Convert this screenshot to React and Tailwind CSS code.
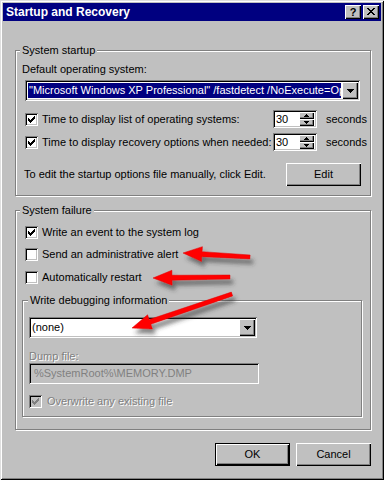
import React from 'react';

const raised = 'shadow-[inset_1px_1px_0_#fff,inset_-1px_-1px_0_#000,inset_-2px_-2px_0_#808080]';
const sunken = 'shadow-[inset_1px_1px_0_#808080,inset_-1px_-1px_0_#fff,inset_2px_2px_0_#000,inset_-2px_-2px_0_#c0c0c0]';
const disabledText = 'text-[#808080] [text-shadow:1px_1px_0_#fff]';

const CHECK = ['......#', '.....##', '#...###', '##.###.', '#####..', '.###...', '..#....'];
const CLOSE = ['##....##', '.##..##.', '..####..', '...##...', '..####..', '.##..##.', '##....##'];

function Pixels({ rows, color, className }) {
  return (
    <svg className={className} width={rows[0].length} height={rows.length} shapeRendering="crispEdges">
      {rows.map((row, y) =>
        row.split('').map((c, x) => (c === '#' ? <rect key={`${x}-${y}`} x={x} y={y} width="1" height="1" fill={color} /> : null))
      )}
    </svg>
  );
}

function Checkbox({ checked, disabled }) {
  return (
    <span className={`relative block w-[13px] h-[13px] shrink-0 ${disabled ? 'bg-[#c0c0c0]' : 'bg-white'} ${sunken}`}>
      {checked && <Pixels rows={CHECK} color={disabled ? '#808080' : '#000'} className="absolute left-[3px] top-[3px]" />}
    </span>
  );
}

function DropButton() {
  return (
    <span className={`flex items-center justify-center w-[16px] h-full bg-[#c0c0c0] ${raised}`}>
      <svg width="7" height="4" shapeRendering="crispEdges">
        <polygon points="0,0 7,0 3.5,4" fill="#000" />
      </svg>
    </span>
  );
}

function Spinner({ value }) {
  return (
    <div className={`flex w-[44px] h-[18px] bg-white p-[2px] ${sunken}`}>
      <span className="flex-1 pl-[1px] leading-[14px]">{value}</span>
      <div className="flex flex-col w-[15px] mr-[1px]">
        <span className={`flex-1 flex items-center justify-center bg-[#c0c0c0] ${raised}`}>
          <svg width="5" height="3" shapeRendering="crispEdges"><polygon points="2.5,0 5,3 0,3" fill="#000" /></svg>
        </span>
        <span className={`flex-1 flex items-center justify-center bg-[#c0c0c0] ${raised}`}>
          <svg width="5" height="3" shapeRendering="crispEdges"><polygon points="0,0 5,0 2.5,3" fill="#000" /></svg>
        </span>
      </div>
    </div>
  );
}

function GroupBox({ label, labelLeft = 'left-[4px]', className = '', children }) {
  return (
    <div className={`relative border border-[#808080] shadow-[inset_1px_1px_0_#fff,1px_1px_0_#fff] ${className}`}>
      <span className={`absolute -top-[7px] ${labelLeft} px-[2px] bg-[#c0c0c0] leading-[13px]`}>{label}</span>
      {children}
    </div>
  );
}

function arrowPoints(tip, tail, w = 2.5, L = 19, H = 7.5) {
  const dx = tail[0] - tip[0];
  const dy = tail[1] - tip[1];
  const len = Math.hypot(dx, dy);
  const ux = dx / len;
  const uy = dy / len;
  const nx = -uy;
  const ny = ux;
  const bx = tip[0] + ux * L;
  const by = tip[1] + uy * L;
  const pts = [
    [tip[0], tip[1]],
    [bx + nx * H, by + ny * H],
    [bx + nx * w, by + ny * w],
    [tail[0] + nx * w * 0.8, tail[1] + ny * w * 0.8],
    [tail[0] - nx * w * 0.8, tail[1] - ny * w * 0.8],
    [bx - nx * w, by - ny * w],
    [bx - nx * H, by - ny * H],
  ];
  return pts.map((p) => p.join(',')).join(' ');
}

function Arrows() {
  const arrows = [
    [[183, 253], [250, 257]],
    [[153, 278], [230, 277]],
    [[132, 328], [232, 294]],
  ];
  return (
    <svg className="absolute inset-0 pointer-events-none" width="384" height="480">
      <defs>
        <filter id="arrowShadow" x="-20%" y="-50%" width="150%" height="250%">
          <feDropShadow dx="3" dy="5" stdDeviation="2" floodColor="#303030" floodOpacity="0.6" />
        </filter>
      </defs>
      {arrows.map(([tip, tail], i) => (
        <polygon key={i} points={arrowPoints(tip, tail)} fill="#ff0000" stroke="#e00000" strokeWidth="0.5" filter="url(#arrowShadow)" />
      ))}
    </svg>
  );
}

export default function App() {
  return (
    <div className="w-[384px] h-[480px] relative bg-[#c0c0c0] p-[3px] text-[11px] leading-[13px] text-black font-['Liberation_Sans',Arial,sans-serif] shadow-[inset_1px_1px_0_#dfdfdf,inset_-1px_-1px_0_#000,inset_2px_2px_0_#fff,inset_-2px_-2px_0_#808080]">
      {/* title bar */}
      <div className="h-[18px] bg-[#000080] flex items-center justify-between pl-[3px] pr-[2px]">
        <span className="text-white font-bold text-[12px] leading-[14px]">Startup and Recovery</span>
        <div className="flex gap-[2px]">
          <span className={`w-[16px] h-[14px] bg-[#c0c0c0] flex items-center justify-center font-bold text-[11px] leading-[12px] ${raised}`}>?</span>
          <span className={`w-[16px] h-[14px] bg-[#c0c0c0] flex items-center justify-center ${raised}`}>
            <Pixels rows={CLOSE} color="#000" className="-mt-[1px]" />
          </span>
        </div>
      </div>

      {/* System startup */}
      <GroupBox label="System startup" className="mt-[29px] ml-[12px] w-[356px]">
        <div className="mt-[12px] ml-[6px]">Default operating system:</div>
        <div className={`mt-[4px] ml-[9px] w-[335px] h-[21px] bg-white p-[2px] flex ${sunken}`}>
          <div className="flex-1 min-w-0 bg-[#000080] text-white m-[1px] mr-[1px] pl-[1px] overflow-hidden whitespace-nowrap leading-[15px]">
            "Microsoft Windows XP Professional" /fastdetect /NoExecute=OptIn
          </div>
          <DropButton />
        </div>
        <div className="mt-[9px] ml-[9px] h-[18px] flex items-center">
          <Checkbox checked />
          <span className="ml-[4px] w-[231px] whitespace-nowrap">Time to display list of operating systems:</span>
          <Spinner value="30" />
          <span className="ml-[9px]">seconds</span>
        </div>
        <div className="mt-[5px] ml-[9px] h-[18px] flex items-center">
          <Checkbox checked />
          <span className="ml-[4px] w-[231px] whitespace-nowrap">Time to display recovery options when needed:</span>
          <Spinner value="30" />
          <span className="ml-[9px]">seconds</span>
        </div>
        <div className="mt-[12px] mb-[9px] ml-[8px] mr-[9px] flex items-center justify-between">
          <span>To edit the startup options file manually, click Edit.</span>
          <span className={`w-[75px] h-[23px] flex items-center justify-center bg-[#c0c0c0] ${raised}`}>Edit</span>
        </div>
      </GroupBox>

      {/* System failure */}
      <GroupBox label="System failure" className="mt-[14px] ml-[12px] w-[356px] pb-[12px]">
        <div className="mt-[13px] ml-[9px] h-[17px] flex items-center">
          <Checkbox checked />
          <span className="ml-[4px]">Write an event to the system log</span>
        </div>
        <div className="mt-[5px] ml-[9px] h-[17px] flex items-center">
          <Checkbox />
          <span className="ml-[4px]">Send an administrative alert</span>
        </div>
        <div className="mt-[6px] ml-[9px] h-[17px] flex items-center">
          <Checkbox />
          <span className="ml-[4px]">Automatically restart</span>
        </div>

        <GroupBox label="Write debugging information" labelLeft="left-[5px]" className="mt-[14px] ml-[6px] w-[340px]">
          <div className={`mt-[16px] ml-[6px] w-[228px] h-[21px] bg-white p-[2px] flex ${sunken}`}>
            <span className="flex-1 pl-[1px] leading-[17px]">(none)</span>
            <DropButton />
          </div>
          <div className={`mt-[12px] ml-[6px] ${disabledText}`}>Dump file:</div>
          <div className={`ml-[6px] w-[230px] h-[21px] bg-[#c0c0c0] pl-[5px] flex items-center text-[#808080] ${sunken}`}>
            %SystemRoot%\MEMORY.DMP
          </div>
          <div className="mt-[9px] mb-[6px] ml-[6px] h-[17px] flex items-center">
            <Checkbox checked disabled />
            <span className={`ml-[5px] ${disabledText}`}>Overwrite any existing file</span>
          </div>
        </GroupBox>
      </GroupBox>

      {/* buttons */}
      <div className="mt-[13px] mr-[10px] flex justify-end gap-[6px]">
        <span className="w-[75px] h-[23px] border border-black">
          <span className={`w-full h-full flex items-center justify-center bg-[#c0c0c0] ${raised}`}>OK</span>
        </span>
        <span className={`w-[75px] h-[23px] flex items-center justify-center bg-[#c0c0c0] ${raised}`}>Cancel</span>
      </div>

      <Arrows />
    </div>
  );
}
